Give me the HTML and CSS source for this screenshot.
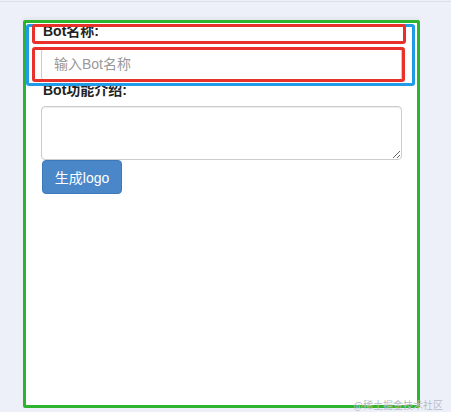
FILE: index.html
```html
<!DOCTYPE html>
<html lang="zh">
<head>
<meta charset="utf-8">
<title>Bot</title>
<link rel="stylesheet" href="styles.css">
</head>
<body>
<div class="topline"></div>
<div class="card">
  <form class="form">
    <label class="label" for="name">Bot名称:</label>
    <input class="input" id="name" type="text" placeholder="输入Bot名称">
    <label class="label label-desc" for="desc">Bot功能介绍:</label>
    <textarea class="textarea" id="desc" rows="2"></textarea>
    <button class="btn" type="button">生成logo</button>
  </form>
  <div class="mark mark-blue"></div>
  <div class="mark mark-red1"></div>
  <div class="mark mark-red2"></div>
</div>
<div class="watermark">@稀土掘金技术社区</div>
</body>
</html>
```

FILE: styles.css
```css
html, body {
  margin: 0;
  padding: 0;
}
body {
  background: #eef0f9;
  width: 451px;
  height: 412px;
  overflow: hidden;
  position: relative;
  font-family: "Liberation Sans", "Noto Sans CJK SC", sans-serif;
  font-size: 14px;
  color: #333;
}
.topline {
  height: 1px;
  margin-top: 1px;
  background: #dcdfea;
}
.card {
  position: relative;
  box-sizing: border-box;
  margin-left: 23px;
  margin-top: 18px;
  width: 397px;
  height: 388px;
  background: #fff;
  border: 3px solid #2db42e;
  border-radius: 2px;
  box-shadow: 0 -3px 2px rgba(0, 0, 0, 0.03);
}
.form {
  display: flex;
  flex-direction: column;
  align-items: flex-start;
  padding: 0 15px;
}
.label {
  display: block;
  font-weight: bold;
  line-height: 16px;
  color: #222;
  padding-left: 2px;
}
.label-desc {
  margin-top: 1px;
}
.input {
  box-sizing: border-box;
  margin-top: 8px;
  width: 361px;
  height: 34px;
  padding: 6px 12px;
  font-family: inherit;
  font-size: 14px;
  color: #555;
  border: 1px solid #ccc;
  border-radius: 4px;
  box-shadow: inset 0 1px 1px rgba(0, 0, 0, 0.075);
  outline: none;
}
.input::placeholder {
  color: #999;
}
.textarea {
  box-sizing: border-box;
  display: block;
  margin: 8px 0 0;
  width: 361px;
  height: 54px;
  padding: 6px 12px;
  font-family: inherit;
  font-size: 14px;
  border: 1px solid #ccc;
  border-radius: 4px;
  box-shadow: inset 0 1px 1px rgba(0, 0, 0, 0.075);
}
.btn {
  box-sizing: border-box;
  margin-left: 1px;
  width: 80px;
  height: 34px;
  padding: 0;
  font-family: inherit;
  font-size: 14px;
  color: #fff;
  background: #4a87c9;
  border: 1px solid #3d78b8;
  border-radius: 4px;
}
.mark {
  position: absolute;
  box-sizing: border-box;
  border-radius: 3px;
  pointer-events: none;
}
.mark-blue {
  left: 0;
  top: 1px;
  width: 389px;
  height: 62px;
  border: 3px solid #1f9be8;
}
.mark-red1 {
  left: 6px;
  top: 1px;
  width: 374px;
  height: 20px;
  border: 3px solid #e8312b;
}
.mark-red2 {
  left: 6px;
  top: 24px;
  width: 373px;
  height: 35px;
  border: 3px solid #e8312b;
}
.watermark {
  position: absolute;
  right: 8px;
  bottom: 1px;
  font-size: 10px;
  line-height: 12px;
  color: #b9bcc4;
  font-family: "Noto Sans CJK SC", sans-serif;
}
```
